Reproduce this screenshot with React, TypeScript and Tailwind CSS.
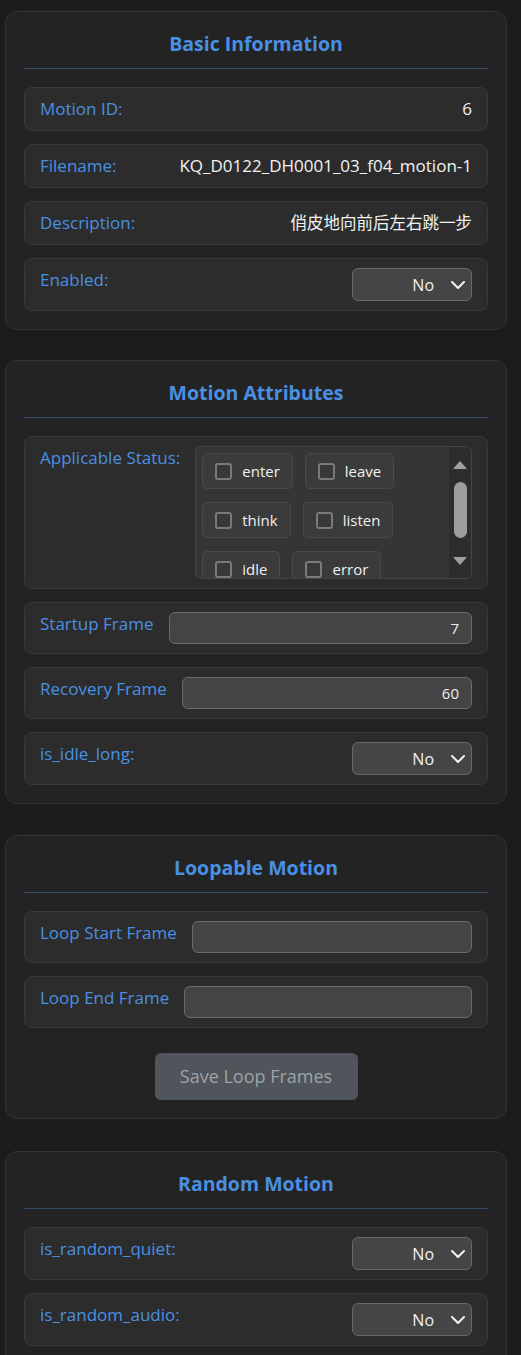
import React from "react";

const Chevron = () => (
  <svg width="14" height="8" viewBox="0 0 14 8" fill="none">
    <polyline points="1,1 7,7 13,1" stroke="#f2f2f2" strokeWidth="2" strokeLinecap="round" strokeLinejoin="round" />
  </svg>
);

const SelectBox = ({ value }: { value: string }) => (
  <div className="flex h-[33px] w-[120px] shrink-0 items-center justify-end rounded-[6px] border border-[#686868] bg-[#454545] pr-[6px] text-[16px] text-[#f2f2f2]">
    <span className="mr-[17px]">{value}</span>
    <Chevron />
  </div>
);

const TextInput = ({ value }: { value?: string }) => (
  <input
    readOnly
    defaultValue={value}
    className="h-[32px] min-w-0 flex-1 rounded-[6px] border border-[#6c6c6c] bg-[#444444] px-[12px] text-right text-[15px] text-[#eeeeee] outline-none"
  />
);

const Row = ({ label, children }: { label: string; children?: React.ReactNode }) => (
  <div className="flex items-start justify-between gap-[15px] rounded-[8px] border border-[#3a3a3a] bg-[#2c2c2c] px-[15px] py-[9px]">
    <span className="shrink-0 text-[17px] leading-[24px] text-[#4a90e2]">{label}</span>
    {children}
  </div>
);

const Card = ({ title, children }: { title: string; children: React.ReactNode }) => (
  <div className="rounded-[12px] border border-[#333333] bg-[#232323] px-[18px] pt-[18px] pb-[18px]">
    <h2 className="mb-[18px] border-b border-[#2f4a6a] pb-[10px] text-center text-[19.5px] leading-[28px] font-bold text-[#4a90e2]">
      {title}
    </h2>
    {children}
  </div>
);

const statuses = ["enter", "leave", "think", "listen", "idle", "error"];

const StatusItem = ({ name }: { name: string }) => (
  <div className="flex h-[36px] items-center gap-[10px] rounded-[5px] border border-[#4a4a4a] bg-[#3b3b3b] px-[12px] text-[15px] text-[#f0f0f0]">
    <span className="h-[17px] w-[17px] rounded-[3px] border-2 border-[#7a7a7a] bg-[#383838]" />
    <span>{name}</span>
  </div>
);

const StatusPicker = () => (
  <div className="flex h-[133px] min-w-0 flex-1 overflow-hidden rounded-[6px] border border-[#454545] bg-[#353535]">
    <div className="flex min-w-0 flex-1 flex-wrap content-start gap-x-[12px] gap-y-[13px] p-[6px]">
      {statuses.map((s) => (
        <StatusItem key={s} name={s} />
      ))}
    </div>
    {/* scrollbar */}
    <div className="flex w-[22px] shrink-0 flex-col items-center bg-[#2d2d2d]">
      <div className="mt-[14px] h-0 w-0 border-x-[7px] border-b-[8px] border-x-transparent border-b-[#a0a0a0]" />
      <div className="mt-[13px] h-[56px] w-[13px] rounded-full bg-[#9d9d9d]" />
      <div className="mt-[19px] h-0 w-0 border-x-[7px] border-t-[8px] border-x-transparent border-t-[#a0a0a0]" />
    </div>
  </div>
);

export default function App() {
  return (
    <div className="min-h-screen bg-[#1c1c1c] pt-[11px] pl-[5px] font-['Open_Sans','Noto_Sans_CJK_SC',sans-serif]">
      <div className="flex w-[502px] flex-col gap-[31px]">
        <div className="-mb-[1px]">
          <Card title="Basic Information">
            <div className="flex flex-col gap-[13px]">
              <Row label="Motion ID:">
                <span className="text-[17px] leading-[24px] text-[#f2f2f2]">6</span>
              </Row>
              <Row label="Filename:">
                <span className="truncate text-[17px] leading-[24px] text-[#f2f2f2]">KQ_D0122_DH0001_03_f04_motion-1</span>
              </Row>
              <Row label="Description:">
                <span className="text-[16.5px] leading-[24px] text-[#f2f2f2]">俏皮地向前后左右跳一步</span>
              </Row>
              <Row label="Enabled:">
                <SelectBox value="No" />
              </Row>
            </div>
          </Card>
        </div>

        <Card title="Motion Attributes">
          <div className="flex flex-col gap-[13px]">
            <Row label="Applicable Status:">
              <StatusPicker />
            </Row>
            <Row label="Startup Frame">
              <TextInput value="7" />
            </Row>
            <Row label="Recovery Frame">
              <TextInput value="60" />
            </Row>
            <Row label="is_idle_long:">
              <SelectBox value="No" />
            </Row>
          </div>
        </Card>

        <Card title="Loopable Motion">
          <div className="flex flex-col gap-[13px]">
            <Row label="Loop Start Frame">
              <TextInput />
            </Row>
            <Row label="Loop End Frame">
              <TextInput />
            </Row>
          </div>
          <div className="mt-[25px] flex justify-center">
            <button className="h-[47px] w-[203px] rounded-[6px] bg-[#4f555b] text-[18px] text-[#9ea3a8]">
              Save Loop Frames
            </button>
          </div>
        </Card>

        <div className="mt-[1px]">
          <Card title="Random Motion">
            <div className="flex flex-col gap-[13px]">
              <Row label="is_random_quiet:">
                <SelectBox value="No" />
              </Row>
              <Row label="is_random_audio:">
                <SelectBox value="No" />
              </Row>
            </div>
          </Card>
        </div>
      </div>
    </div>
  );
}
